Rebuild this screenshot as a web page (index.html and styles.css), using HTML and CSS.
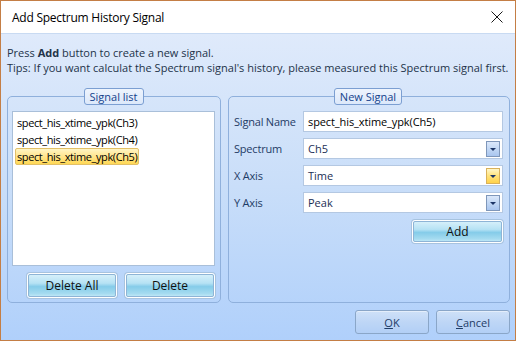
FILE: index.html
```html
<!DOCTYPE html>
<html lang="en">
<head>
    <meta charset="UTF-8">
    <title>Add Spectrum History Signal</title>
    <link rel="stylesheet" href="styles.css">
</head>
<body>
    <div class="window">
        <div class="titlebar">
            <span class="title">Add Spectrum History Signal</span>
            <svg class="close" width="12" height="12" viewBox="0 0 12 12">
                <path d="M0.5 0.5 L11.5 11.5 M11.5 0.5 L0.5 11.5" stroke="#1a1a1a" stroke-width="1" fill="none"/>
            </svg>
        </div>

        <div class="client">
            <div class="intro">
                <p>Press <b>Add</b> button to create a new signal.</p>
                <p>Tips: If you want calculat the Spectrum signal's history, please measured this Spectrum signal first.</p>
            </div>

            <div class="groups">
                <fieldset class="group group-list">
                    <legend>Signal list</legend>
                    <div class="listbox">
                        <div class="list-item">spect_his_xtime_ypk(Ch3)</div>
                        <div class="list-item">spect_his_xtime_ypk(Ch4)</div>
                        <div class="list-item"><span class="selected">spect_his_xtime_ypk(Ch5)</span></div>
                    </div>
                    <div class="list-buttons">
                        <button class="aqua-btn">Delete All</button>
                        <button class="aqua-btn">Delete</button>
                    </div>
                </fieldset>

                <fieldset class="group group-new">
                    <legend>New Signal</legend>
                    <div class="form">
                        <label>Signal Name</label>
                        <div class="field"><span class="value strong">spect_his_xtime_ypk(Ch5)</span></div>

                        <label>Spectrum</label>
                        <div class="field"><span class="value">Ch5</span><span class="drop"></span></div>

                        <label>X Axis</label>
                        <div class="field"><span class="value">Time</span><span class="drop hot"></span></div>

                        <label>Y Axis</label>
                        <div class="field"><span class="value">Peak</span><span class="drop"></span></div>
                    </div>
                    <div class="add-row">
                        <button class="aqua-btn add-btn">Add</button>
                    </div>
                </fieldset>
            </div>

            <div class="footer">
                <button class="dlg-btn"><u>O</u>K</button>
                <button class="dlg-btn"><u>C</u>ancel</button>
            </div>
        </div>
    </div>
</body>
</html>
```

FILE: styles.css
```css
* {
    margin: 0;
    padding: 0;
    box-sizing: border-box;
}

body {
    font-family: "Open Sans", "Noto Sans", sans-serif;
    font-size: 11px;
    background: #ffffff;
}

.window {
    width: 516px;
    height: 341px;
    border: 1px solid #c47e45;
    display: flex;
    flex-direction: column;
}

.titlebar {
    height: 32px;
    background: #ffffff;
    display: flex;
    align-items: center;
    justify-content: space-between;
    padding: 0 12px 0 11px;
    color: #000;
}

.title {
    font-size: 12px;
    letter-spacing: -0.25px;
}

.close {
    display: block;
}

.client {
    flex: 1;
    display: flex;
    flex-direction: column;
    border-top: 1px solid #c8daf2;
    background: linear-gradient(180deg, #dfeafb 0%, #c9def9 50%, #b0d0fb 100%);
    padding: 0 5px 6px 6px;
}

.intro {
    padding-top: 11px;
    color: #233349;
    line-height: 15px;
}

.intro b {
    font-weight: 700;
}

.groups {
    display: flex;
    gap: 7px;
    margin-top: 13px;
    height: 215px;
}

.group {
    border: 1px solid #8fb0dc;
    border-radius: 5px;
    padding: 6px 5px 3px 4px;
    display: flex;
    flex-direction: column;
}

.group legend {
    margin: 0 auto;
    height: 17px;
    line-height: 15px;
    padding: 0 5px;
    border: 1px solid #7c9fd2;
    border-radius: 3px;
    background: linear-gradient(180deg, #eef4fd 0%, #dce8fa 100%);
    color: #15428b;
    font-size: 11px;
}

.group-list {
    width: 214px;
}

.group-new {
    flex: 1;
    padding-right: 6px;
}

.listbox {
    height: 155px;
    background: #ffffff;
    border: 1px solid #a9bfd9;
    padding: 2px 1px;
}

.list-item {
    height: 17px;
    line-height: 17px;
    color: #000;
    padding-left: 3px;
    letter-spacing: -0.4px;
}

.selected {
    display: inline-block;
    margin-left: -2px;
    padding: 0 1px;
    height: 17px;
    line-height: 15px;
    border: 1px solid #e2c068;
    border-radius: 2px;
    background: linear-gradient(180deg, #fff5c4 0%, #ffe58d 50%, #ffd855 100%);
}

.list-buttons {
    display: flex;
    justify-content: flex-end;
    gap: 8px;
    margin-top: 7px;
}

.aqua-btn {
    width: 90px;
    height: 25px;
    font-family: inherit;
    font-size: 12px;
    color: #111;
    border: 1px solid #ffffff;
    border-radius: 3px;
    outline: 1px solid #8eb4d6;
    outline-offset: -2px;
    background: linear-gradient(180deg, #d9f1fb 0%, #b6e2f4 40%, #85cce9 55%, #a5dbf0 85%, #c6ebf8 100%);
    box-shadow: 0 0 0 1px #a7c3df;
}

.form {
    display: grid;
    grid-template-columns: 70px 1fr;
    row-gap: 6px;
    align-items: center;
}

.form label {
    color: #1f3c66;
    font-size: 11px;
    letter-spacing: -0.2px;
    padding-left: 1px;
}

.field {
    height: 21px;
    background: #ffffff;
    border: 1px solid #b4c8e2;
    display: flex;
    align-items: center;
    justify-content: space-between;
    padding: 0 2px 0 4px;
}

.value {
    color: #1b2f55;
    font-size: 11px;
}

.value.strong {
    color: #000;
    font-size: 11px;
    letter-spacing: -0.1px;
}

.drop {
    width: 14px;
    height: 16px;
    border: 1px solid #7f97ba;
    background: linear-gradient(180deg, #dbe8fa 0%, #c2d7f4 50%, #a9c6ef 100%);
    position: relative;
}

.drop::after {
    content: '';
    position: absolute;
    left: 3px;
    top: 6px;
    border-left: 3px solid transparent;
    border-right: 3px solid transparent;
    border-top: 3px solid #1c3566;
}

.drop.hot {
    border-color: #d9b15a;
    background: linear-gradient(180deg, #fff6c8 0%, #ffe27a 50%, #ffd24a 100%);
}

.add-row {
    display: flex;
    justify-content: flex-end;
    margin-top: 7px;
}

.add-btn {
    width: 91px;
    height: 23px;
}

.footer {
    display: flex;
    justify-content: flex-end;
    gap: 7px;
    margin-top: 7px;
}

.dlg-btn {
    width: 74px;
    height: 24px;
    font-family: inherit;
    font-size: 11px;
    color: #1f3c66;
    border: 1px solid #8aa6c8;
    border-radius: 3px;
    background: linear-gradient(180deg, #cfe1f8 0%, #bed6f6 50%, #b2cff6 100%);
    box-shadow: inset 0 1px 0 #e4eefb;
}
```
